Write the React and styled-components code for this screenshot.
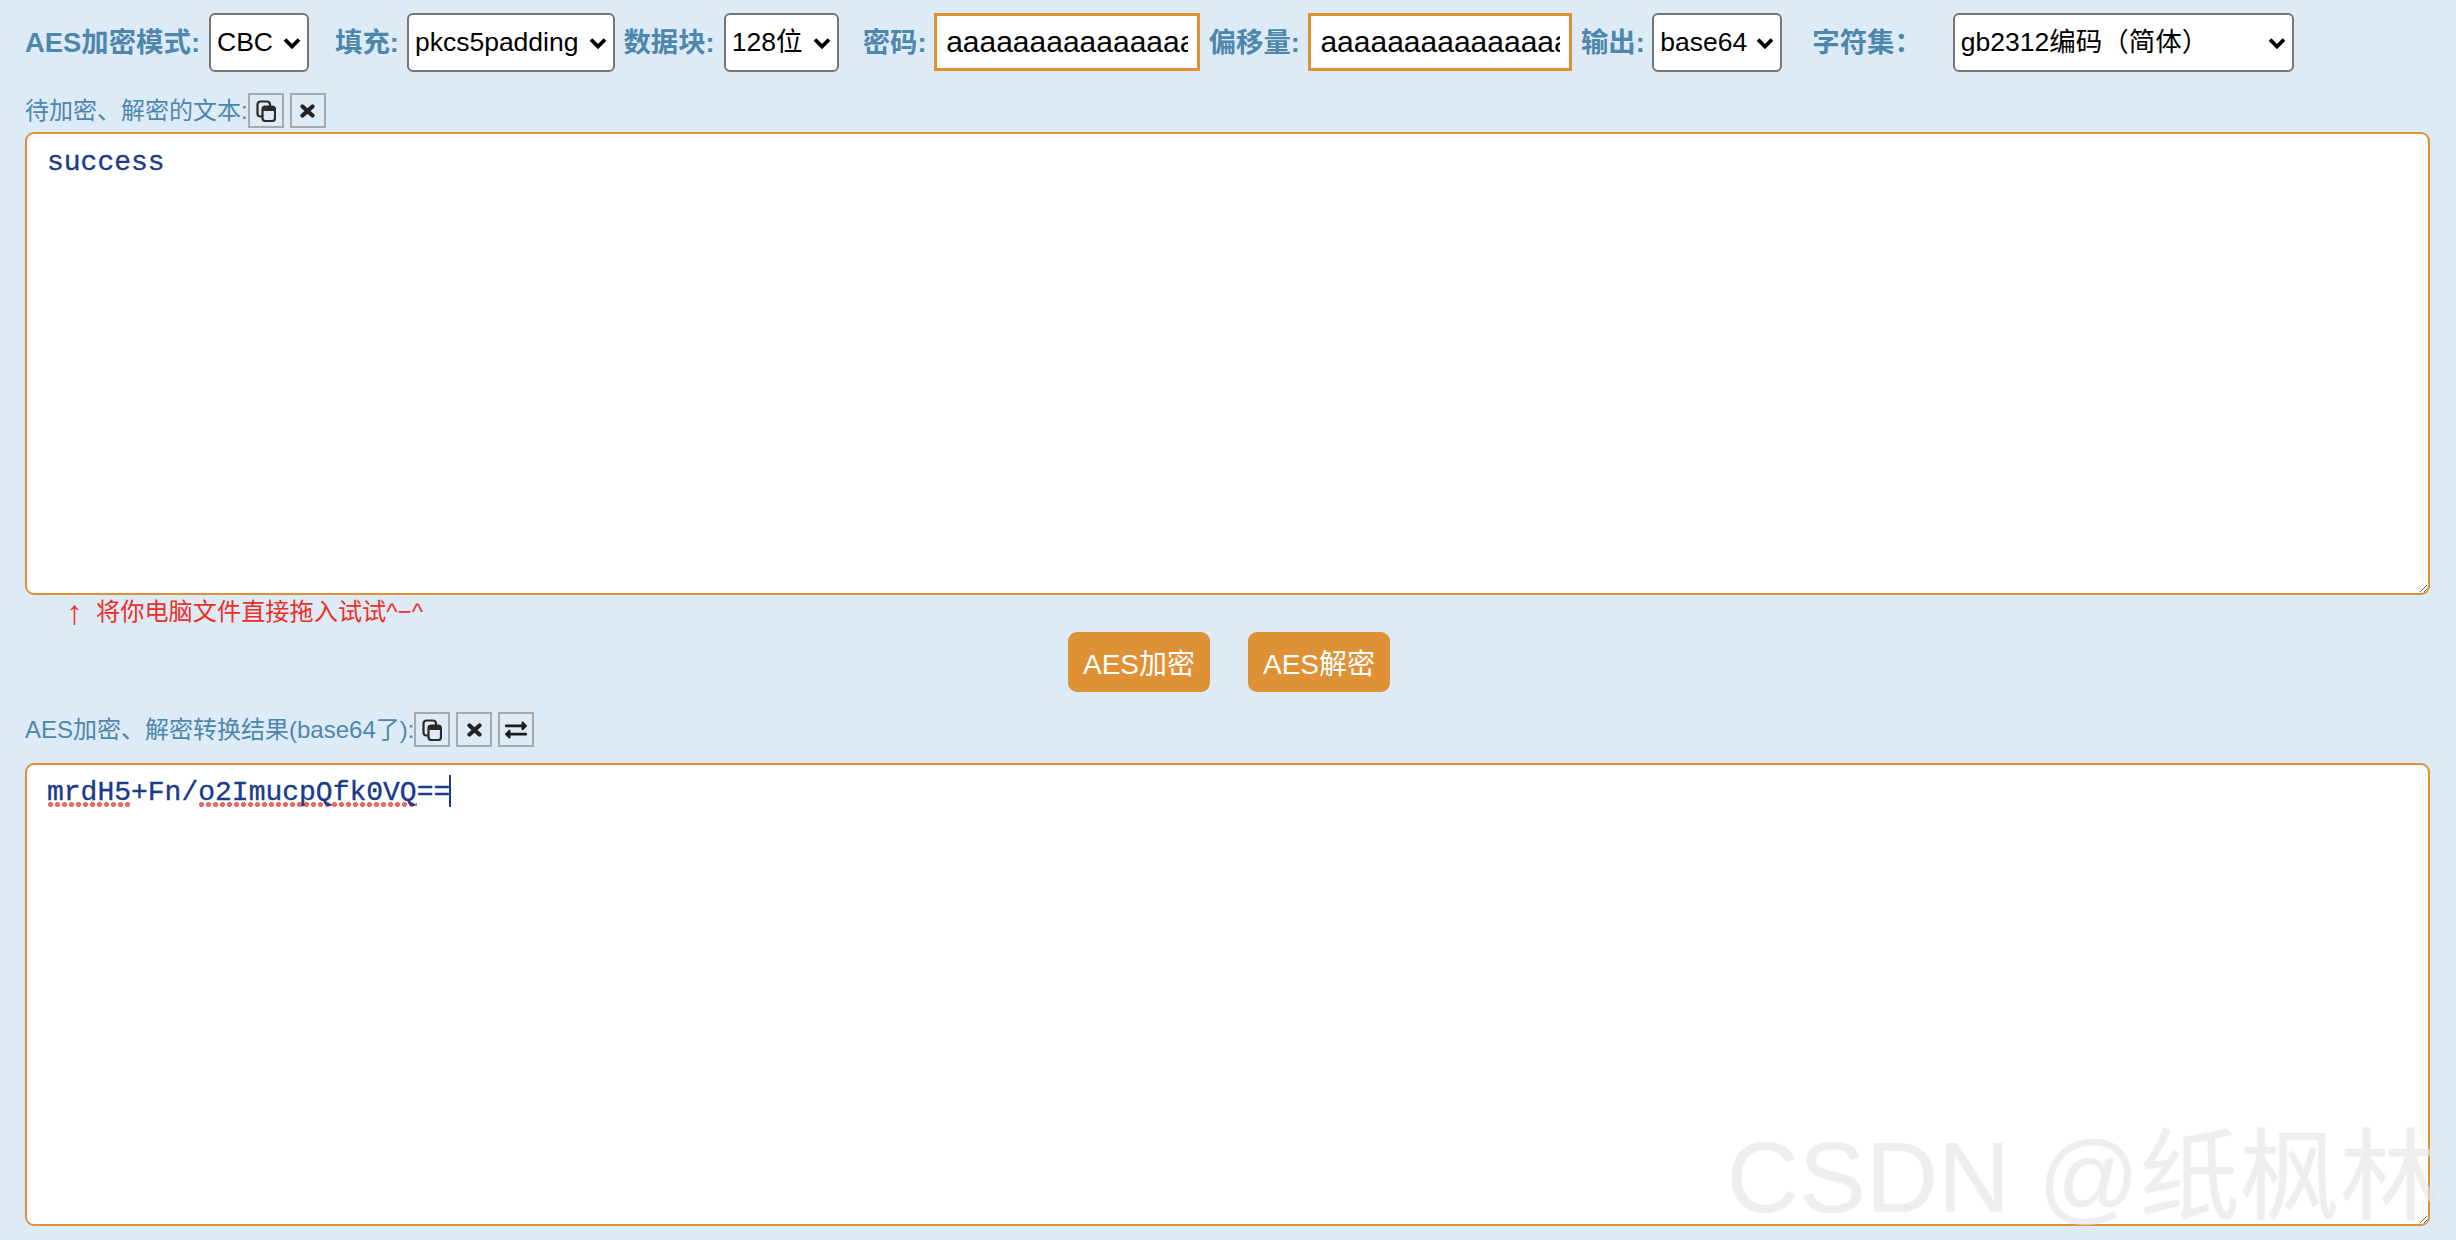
import React from "react";
import styled, { createGlobalStyle, css } from "styled-components";
import { FaExchangeAlt } from "react-icons/fa";

const GlobalStyle = createGlobalStyle`
  html, body {
    margin: 0;
    padding: 0;
    background-color: #ddebf6;
    font-family: "Liberation Sans", "Noto Sans CJK SC", sans-serif;
  }
`;

function Chevron() {
  return (
    <ChevronIcon viewBox="0 0 18 13">
      <path d="M2 2.5l7 7 7-7" fill="none" stroke="#000" strokeWidth="3.8" />
    </ChevronIcon>
  );
}

function CopyIcon() {
  return (
    <svg width="20" height="22" viewBox="0 0 20 22">
      <path
        d="M6 16.5H4.5a3 3 0 0 1-3-3v-9a3 3 0 0 1 3-3H11a3 3 0 0 1 3 3V6"
        fill="none"
        stroke="#2a2a2a"
        strokeWidth="2.2"
      />
      <rect x="6.5" y="6.5" width="12.5" height="14.5" rx="3" fill="none" stroke="#2a2a2a" strokeWidth="2.2" />
      <rect x="6.5" y="6.5" width="12.5" height="4.5" fill="#2a2a2a" />
    </svg>
  );
}

function CloseIcon() {
  return (
    <svg width="15" height="14" viewBox="0 0 15 14">
      <path d="M2.5 2.5l10 9M12.5 2.5l-10 9" fill="none" stroke="#222" strokeWidth="4.2" strokeLinecap="round" />
    </svg>
  );
}

function Select({ width, value, options }) {
  return (
    <SelectWrap $width={width}>
      <NativeSelect defaultValue={value}>
        {options.map((o) => (
          <option key={o}>{o}</option>
        ))}
      </NativeSelect>
      <Chevron />
    </SelectWrap>
  );
}

function App() {
  return (
    <>
      <GlobalStyle />
      <Page>
        <Toolbar>
          <FieldLabel>AES加密模式:</FieldLabel>
          <Select width={100} value="CBC" options={["CBC", "ECB", "CTR", "OFB", "CFB"]} />
          <FieldLabel $before={26} $after={8}>填充:</FieldLabel>
          <Select width={208} value="pkcs5padding" options={["pkcs5padding", "pkcs7padding", "zeropadding", "iso10126", "ansix923"]} />
          <FieldLabel $before={8.5}>数据块:</FieldLabel>
          <Select width={115} value="128位" options={["128位", "192位", "256位"]} />
          <FieldLabel $before={24} $after={7}>密码:</FieldLabel>
          <KeyInput $width={266} defaultValue="aaaaaaaaaaaaaaaa" />
          <FieldLabel $before={9} $after={8}>偏移量:</FieldLabel>
          <KeyInput $width={264} defaultValue="aaaaaaaaaaaaaaaa" />
          <FieldLabel $before={9} $after={7.5}>输出:</FieldLabel>
          <Select width={130} value="base64" options={["base64", "hex"]} />
          <FieldLabel $before={30} $after={30.8}>字符集：</FieldLabel>
          <Select width={341} value="gb2312编码（简体）" options={["gb2312编码（简体）", "utf8编码（英文）"]} />
        </Toolbar>

        <CaptionRow>
          <Caption>待加密、解密的文本:</Caption>
          <IconButton title="复制"><CopyIcon /></IconButton>
          <IconButton title="清空"><CloseIcon /></IconButton>
        </CaptionRow>
        <SourceBox defaultValue="success" spellCheck={false} />

        <DropHint>
          <DropArrow>↑</DropArrow>
          将你电脑文件直接拖入试试^−^
        </DropHint>

        <Actions>
          <ActionButton>AES加密</ActionButton>
          <ActionButton>AES解密</ActionButton>
        </Actions>

        <CaptionRow $result>
          <Caption>AES加密、解密转换结果(base64了):</Caption>
          <IconButton title="复制"><CopyIcon /></IconButton>
          <IconButton title="清空"><CloseIcon /></IconButton>
          <IconButton title="交换"><FaExchangeAlt size={22} /></IconButton>
        </CaptionRow>
        <ResultWrap>
          <ResultBox>
            <Misspelled>mrdH5</Misspelled>+Fn/<Misspelled>o2ImucpQfk0VQ</Misspelled>==<Caret />
          </ResultBox>
          <Watermark>CSDN @纸枫林</Watermark>
        </ResultWrap>
      </Page>
    </>
  );
}

const Page = styled.div`
  box-sizing: border-box;
  width: 2456px;
  height: 1240px;
  padding: 12px 26.5px 0 25px;
  overflow: hidden;
  background-color: #ddebf6;
`;

const Toolbar = styled.div`
  display: flex;
  align-items: center;
  height: 60px;
`;

const FieldLabel = styled.label`
  margin-left: ${(p) => p.$before || 0}px;
  margin-right: ${(p) => (p.$after === undefined ? 9 : p.$after)}px;
  padding-bottom: 5px;
  color: #4d87ab;
  font-size: 27.4px;
  font-weight: bold;
  white-space: nowrap;
`;

const SelectWrap = styled.div`
  position: relative;
  flex: none;
  width: ${(p) => p.$width}px;
  height: 59px;
`;

const NativeSelect = styled.select`
  box-sizing: border-box;
  width: 100%;
  height: 100%;
  padding: 0 30px 0 6px;
  border: 2px solid #767676;
  border-radius: 6px;
  outline: none;
  appearance: none;
  background-color: #fff;
  color: #000;
  font-family: "Liberation Sans", "Noto Sans CJK SC", sans-serif;
  font-size: 26.5px;
`;

const ChevronIcon = styled.svg`
  position: absolute;
  top: 24px;
  right: 8px;
  width: 18px;
  height: 13px;
  pointer-events: none;
`;

const KeyInput = styled.input`
  box-sizing: border-box;
  flex: none;
  width: ${(p) => p.$width}px;
  height: 58px;
  padding: 0 9px 0 9.5px;
  border: 3px solid #de9135;
  outline: none;
  background-color: #fff;
  color: #000;
  font-family: "Liberation Sans", sans-serif;
  font-size: 30px;
`;

const CaptionRow = styled.div`
  display: flex;
  align-items: center;
  height: 35px;
  margin-top: ${(p) => (p.$result ? 20 : 21)}px;
  margin-bottom: ${(p) => (p.$result ? 16 : 4)}px;
`;

const Caption = styled.span`
  padding-bottom: 5px;
  color: #4d87ab;
  font-size: 24px;
  white-space: nowrap;
`;

const IconButton = styled.button`
  box-sizing: border-box;
  display: flex;
  align-items: center;
  justify-content: center;
  width: 36px;
  height: 35px;
  margin: 0 6px 0 0;
  padding: 0;
  border: 2.5px solid #a9a9a9;
  background: transparent;
  color: #1c1c1c;
`;

const boxStyle = css`
  box-sizing: border-box;
  display: block;
  width: 100%;
  height: 463px;
  margin: 0;
  padding: 13px 20px;
  border: 2.5px solid #de9135;
  border-radius: 9px;
  outline: none;
  overflow: auto;
  resize: both;
  background-color: #fff;
  color: #1a3a8c;
  font-family: "Liberation Mono", monospace;
  font-size: 28px;
  line-height: 32px;
  -webkit-text-stroke: 0.35px #1a3a8c;
`;

const SourceBox = styled.textarea`
  ${boxStyle}
`;

const DropHint = styled.div`
  display: flex;
  align-items: center;
  height: 30px;
  padding-left: 41px;
  color: #ec2f26;
  font-size: 24.2px;
  line-height: 30px;
  white-space: nowrap;
  transform: translateY(2px);
`;

const DropArrow = styled.span`
  margin-right: 13px;
  font-size: 34px;
`;

const Actions = styled.div`
  display: flex;
  justify-content: center;
  gap: 38px;
  margin-top: 7px;
  padding-left: 3.5px;
`;

const ActionButton = styled.button`
  width: 142px;
  height: 60px;
  padding: 0;
  border: none;
  border-radius: 9px;
  background-color: #de9135;
  color: #fff;
  font-family: "Liberation Sans", "Noto Sans CJK SC", sans-serif;
  font-size: 28px;
`;

const ResultWrap = styled.div`
  position: relative;
`;

const ResultBox = styled.div`
  ${boxStyle}
  padding-top: 10px;
`;

const Misspelled = styled.span`
  background-image: radial-gradient(circle at 3.5px 2.5px, #ee6a62 2.3px, transparent 2.8px);
  background-position: 0 calc(100% - 1px);
  background-repeat: repeat-x;
  background-size: 7px 5px;
`;

const Caret = styled.span`
  display: inline-block;
  width: 2px;
  height: 32px;
  margin-left: -1px;
  vertical-align: -7px;
  background-color: #1a3a8c;
`;

const Watermark = styled.div`
  position: absolute;
  right: -10px;
  bottom: -9px;
  color: rgba(240, 240, 240, 0.55);
  font-size: 100px;
  line-height: 115px;
  white-space: nowrap;
  text-shadow: 0 0 1px rgba(170, 170, 170, 0.25);
  pointer-events: none;
`;

export default App;
